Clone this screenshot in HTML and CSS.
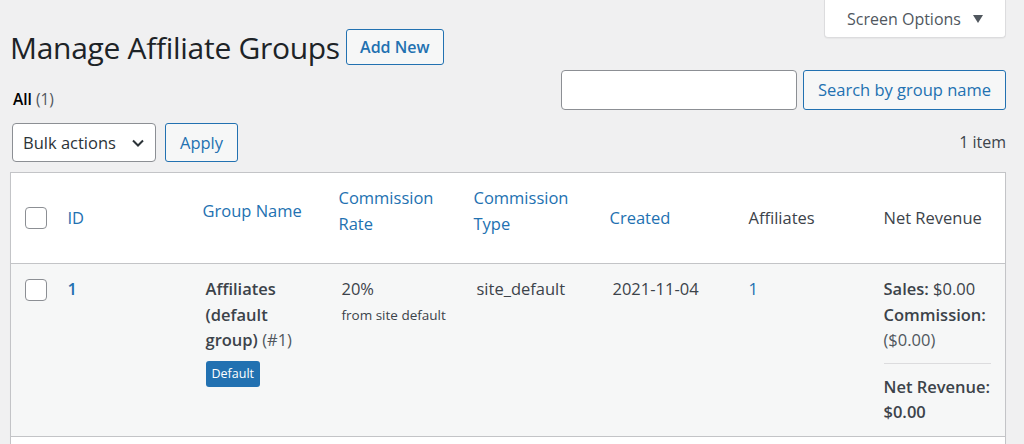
FILE: index.html
```html
<!DOCTYPE html>
<html>
<head>
<meta charset="utf-8">
<link rel="stylesheet" href="styles.css">
</head>
<body>
<div class="wrap">
  <div class="top">
    <div class="title-row">
      <h1 class="title">Manage Affiliate Groups</h1>
      <a class="btn add-new">Add New</a>
    </div>
    <div class="screen-options">Screen Options <span class="tri"></span></div>
  </div>
  <div class="filter-row">
    <div class="subsubsub"><b>All</b> <span class="count">(1)</span></div>
    <div class="search-box">
      <input class="search-input" type="text">
      <a class="btn search-btn">Search by group name</a>
    </div>
  </div>
  <div class="tablenav">
    <div class="bulk">
      <div class="select">Bulk actions
        <svg class="chev" width="16" height="16" viewBox="0 0 16 16"><path d="M3 5.5 L8 10.5 L13 5.5" fill="none" stroke="#2c3338" stroke-width="2"/></svg>
      </div>
      <a class="btn apply">Apply</a>
    </div>
    <div class="items">1 item</div>
  </div>
  <table class="list">
    <colgroup>
      <col class="c-cb"><col class="c-id"><col class="c-name"><col class="c-rate"><col class="c-type"><col class="c-created"><col class="c-aff"><col class="c-net">
    </colgroup>
    <thead>
      <tr>
        <th class="cb"><span class="check"></span></th>
        <th><a>ID</a></th>
        <th class="raised"><a>Group Name</a></th>
        <th class="raised"><a>Commission Rate</a></th>
        <th class="raised"><a>Commission Type</a></th>
        <th><a>Created</a></th>
        <th>Affiliates</th>
        <th>Net Revenue</th>
      </tr>
    </thead>
    <tbody>
      <tr>
        <td class="cb"><span class="check"></span></td>
        <td><a class="strong">1</a></td>
        <td class="inset"><b>Affiliates (default group)</b> <span class="muted">(#1)</span><br><span class="badge">Default</span></td>
        <td class="inset">20%<div class="small">from site default</div></td>
        <td class="inset">site_default</td>
        <td class="inset">2021-11-04</td>
        <td><a>1</a></td>
        <td class="net">
          <div><b>Sales:</b> $0.00</div>
          <div><b>Commission:</b> <span class="muted">($0.00)</span></div>
          <div class="sep"></div>
          <div><b>Net Revenue:</b> <b>$0.00</b></div>
        </td>
      </tr>
    </tbody>
    <tfoot>
      <tr><td colspan="8" class="foot"></td></tr>
    </tfoot>
  </table>
</div>
</body>
</html>
```
FILE: styles.css
```css
html, body {
  margin: 0;
  padding: 0;
  background: #f0f0f1;
}
body {
  font-family: "Open Sans", "Noto Sans", sans-serif;
  font-size: 16.5px;
  color: #3c434a;
  line-height: 1.55;
}
.wrap {
  padding: 0 18px 0 10px;
}
.top {
  display: flex;
  justify-content: space-between;
  align-items: flex-start;
  height: 70px;
}
.title-row {
  display: flex;
  align-items: center;
  padding-top: 29px;
}
.title {
  margin: 0;
  font-size: 30px;
  font-weight: 400;
  color: #1d2327;
  line-height: 35px;
  letter-spacing: -0.3px;
}
.btn {
  display: inline-flex;
  align-items: center;
  justify-content: center;
  box-sizing: border-box;
  border: 1px solid #2271b1;
  border-radius: 3px;
  background: #f6f7f7;
  color: #2271b1;
  cursor: pointer;
}
.add-new {
  margin-left: 6px;
  height: 36px;
  width: 98px;
  font-weight: 600;
  font-size: 16px;
}
.screen-options {
  box-sizing: border-box;
  width: 182px;
  height: 39px;
  margin-top: -1px;
  padding-top: 2px;
  background: #fff;
  border: 1px solid #dcdcde;
  border-top: none;
  border-radius: 0 0 4px 4px;
  color: #50575e;
  display: flex;
  align-items: center;
  justify-content: center;
  gap: 8px;
  font-size: 16px;
  box-shadow: 0 1px 1px rgba(0,0,0,0.04);
}
.tri {
  width: 0;
  height: 0;
  border-left: 5.5px solid transparent;
  border-right: 5.5px solid transparent;
  border-top: 8px solid #50575e;
  margin-left: 4px;
}
.filter-row {
  display: flex;
  justify-content: space-between;
  align-items: flex-start;
  height: 53px;
}
.subsubsub {
  margin-top: 17px;
  padding-left: 3px;
  font-size: 15.5px;
  color: #50575e;
}
.subsubsub b {
  color: #000;
  font-weight: 600;
}
.search-box {
  display: flex;
  gap: 6px;
}
.search-input {
  box-sizing: border-box;
  width: 236px;
  height: 40px;
  border: 1px solid #8c8f94;
  border-radius: 4px;
  background: #fff;
  margin: 0;
}
.search-btn {
  width: 203px;
  height: 40px;
  font-size: 16.5px;
}
.tablenav {
  display: flex;
  justify-content: space-between;
  align-items: center;
  height: 39px;
  margin-bottom: 10px;
}
.bulk {
  display: flex;
  gap: 9px;
  padding-left: 2px;
}
.select {
  box-sizing: border-box;
  width: 144px;
  height: 39px;
  background: #fff;
  border: 1px solid #8c8f94;
  border-radius: 4px;
  color: #2c3338;
  display: flex;
  align-items: center;
  justify-content: space-between;
  padding: 0 9px 0 10px;
  font-size: 16.5px;
}
.apply {
  width: 73px;
  height: 39px;
  font-size: 16.5px;
}
.items {
  font-size: 16px;
  color: #3c434a;
}
.list {
  width: 100%;
  table-layout: fixed;
  border-collapse: collapse;
  background: #fff;
  border: 1px solid #c3c4c7;
  box-shadow: 0 1px 1px rgba(0,0,0,0.04);
}
.c-cb { width: 47px; }
.c-id { width: 135px; }
.c-name { width: 136px; }
.c-rate { width: 135px; }
.c-type { width: 136px; }
.c-created { width: 139px; }
.c-aff { width: 135px; }
.c-net { width: auto; }
thead tr {
  height: 91px;
}
th {
  text-align: left;
  font-weight: 400;
  color: #3c434a;
  vertical-align: middle;
  padding: 12px 10px;
  line-height: 26px;
  border-bottom: 1px solid #c3c4c7;
}
th.raised {
  padding-bottom: 26px;
}
th a, td a {
  color: #2271b1;
}
th.cb, td.cb {
  padding: 0 0 0 14px;
}
td.cb {
  padding-top: 15px;
}
.check {
  display: block;
  box-sizing: border-box;
  width: 22px;
  height: 22px;
  border: 1px solid #8c8f94;
  border-radius: 4px;
  background: #fff;
}
tbody tr {
  background: #f6f7f7;
  height: 173px;
}
td {
  vertical-align: top;
  padding: 12px 10px 10px;
  line-height: 25.5px;
  color: #3c434a;
  border-bottom: 1px solid #c3c4c7;
}
td.inset {
  padding-left: 13px;
  padding-right: 7px;
}
td b, .strong {
  font-weight: 600;
}
.strong { color: #2271b1; }
.muted { color: #50575e; }
.small {
  font-size: 13.5px;
  line-height: 20px;
  margin-top: 3px;
}
.badge {
  display: inline-block;
  background: #2271b1;
  color: #fff;
  font-size: 12.5px;
  line-height: 26px;
  padding: 0 6px;
  border-radius: 3px;
  margin-top: 8px;
}
.net .sep {
  border-top: 1px solid #dcdcde;
  margin: 10px 0 10px;
}
td.net {
  padding-right: 14px;
}
tfoot tr {
  height: 20px;
}
td.foot {
  padding: 0;
  background: #fff;
  border: none;
}
```
